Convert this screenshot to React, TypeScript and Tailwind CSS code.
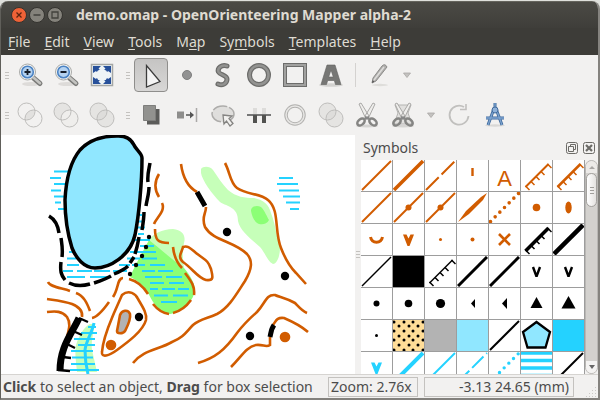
import type { ReactNode } from "react";

const ORANGE = "#d15c00";
const CYAN = "#24d2ff";

function Handle() {
  return (
    <span className="flex w-[11px] shrink-0 flex-col items-center gap-[2px]">
      <i className="h-px w-1 bg-[#c4c2bf]" />
      <i className="h-px w-1 bg-[#c4c2bf]" />
      <i className="h-px w-1 bg-[#c4c2bf]" />
    </span>
  );
}

function Tool({ label, active, children }: { label: string; active?: boolean; children: ReactNode }) {
  return (
    <button type="button" aria-label={label} aria-pressed={active} className="flex h-9 w-9 shrink-0 items-center justify-center">
      <span
        className={
          active
            ? "flex size-[34px] items-center justify-center rounded border border-[#8f8e8c] bg-linear-to-b from-[#c5c4c3] to-[#d8d7d6]"
            : "flex size-[34px] items-center justify-center"
        }
      >
        <svg className="size-7 shrink-0" viewBox="-14 -14 28 28" fill="none">
          {children}
        </svg>
      </span>
    </button>
  );
}

function DropArrow({ label }: { label: string }) {
  return (
    <button type="button" aria-label={label} className="flex h-9 w-5 shrink-0 items-center justify-center">
      <svg className="h-2 w-3" viewBox="0 0 12 8">
        <path d="M2.500 2h7L6 6.500z" fill="#c4c2c0" stroke="#a9a7a5" strokeWidth="0.800" />
      </svg>
    </button>
  );
}

function Magnifier({ plus }: { plus?: boolean }) {
  return (
    <>
      <ellipse cx="1" cy="9" rx="9" ry="2" fill="#dddbd9" />
      <path d="M3.500 3 10 8.500" stroke="#7b7b79" strokeWidth="5" strokeLinecap="round" />
      <path d="M4 3 10 8.200" stroke="#c4c4c1" strokeWidth="2.600" strokeLinecap="round" />
      <circle cx="-2.500" cy="-3" r="8" fill="#f4f4f2" stroke="#a9aaa8" />
      <circle cx="-2.500" cy="-3" r="5.800" fill="#b4d2f1" stroke="#4b83c4" strokeWidth="1.600" />
      <path d={plus ? "M-5.500-3h6M-2.500-6v6" : "M-5.500-3h6"} stroke="#151d2a" strokeWidth="1.800" />
    </>
  );
}

function Circles({ mode }: { mode: "and" | "left" | "minus" | "both" }) {
  return (
    <>
      <circle cx="-3.500" cy="-3.500" r="8.500" fill={mode === "and" ? "none" : "#e5e4e2"} />
      <circle cx="3.500" cy="3.500" r="8.500" fill={mode === "left" ? "#efeeec" : mode === "and" ? "none" : "#e5e4e2"} />
      {mode !== "left" && (
        <path d="M-4.700 4.700A8.500 8.500 0 0 1 4.700-4.700 8.500 8.500 0 0 1-4.700 4.700Z" fill={mode === "and" ? "#e2e1df" : "#dedddb"} />
      )}
      <circle cx="-3.500" cy="-3.500" r="8.500" stroke="#bebdbb" />
      <circle cx="3.500" cy="3.500" r="8.500" stroke="#bebdbb" />
    </>
  );
}

function Scissors() {
  return (
    <>
      <ellipse cx="0" cy="11" rx="11" ry="1.500" fill="#d5d4d2" />
      <path d="M-8-11-6-12 2 1-1 4ZM8-11 6-12-2 1 1 4Z" fill="#efeeec" stroke="#aaa9a7" />
      <path d="M-2 2 2 4M2 2-2 4" stroke="#888" strokeWidth="2.500" />
      <ellipse cx="-6" cy="7" rx="4.200" ry="2.800" transform="rotate(-40 -6 7)" stroke="#858583" strokeWidth="2.500" />
      <ellipse cx="6" cy="7" rx="4.200" ry="2.800" transform="rotate(40 6 7)" stroke="#858583" strokeWidth="2.500" />
    </>
  );
}

function Toolbars() {
  return (
    <div className="shrink-0">
      <div className="flex h-10 items-center gap-[2px]">
        <div className="flex items-center">
          <Handle />
          <Tool label="Zoom in"><Magnifier plus /></Tool>
          <Tool label="Zoom out"><Magnifier /></Tool>
          <Tool label="Show whole map">
            <rect x="-10.500" y="-10.500" width="21" height="21" fill="#eef4f6" stroke="#a5a7a5" strokeWidth="1.500" />
            <path
              d="M-9-9h8l-2.500 2.500 2.500 2-3 3-2-2.500L-9-2ZM9-9H1l2.500 2.500-2.500 2 3 3 2-2.500L9-2ZM-9 9h8L-3.500 6.500-1 4.500l-3-3-2 2.500L-9 2ZM9 9H1l2.500-2.500L1 4.500l3-3 2 2.500L9 2Z"
              fill="#27509a"
            />
            <circle r="6" fill="#eef4f6" />
          </Tool>
        </div>
        <div className="flex items-center">
          <Handle />
          <Tool label="Edit objects" active>
            <path d="M-4.500-9.500V12L9 6.500Z" fill="#f4f4f4" stroke="#3c3c3c" strokeWidth="1.300" />
          </Tool>
          <Tool label="Draw point">
            <circle r="4.500" fill="#929292" stroke="#7e7e7e" />
          </Tool>
          <Tool label="Draw path">
            <path d="M4-9C-1-11-6-7-4.500-3-3 0 4 0 4 4 4 9-1 11-5 9" stroke="#6d6d6b" strokeWidth="5" strokeLinecap="round" />
            <path d="M4-9C-1-11-6-7-4.500-3-3 0 4 0 4 4 4 9-1 11-5 9" stroke="#929290" strokeWidth="2.500" strokeLinecap="round" />
          </Tool>
          <Tool label="Draw circle">
            <circle r="9.500" stroke="#6d6d6b" strokeWidth="5" />
            <circle r="9.500" stroke="#939391" strokeWidth="2.500" />
          </Tool>
          <Tool label="Draw rectangle">
            <rect x="-10" y="-10" width="20" height="20" stroke="#6d6d6b" strokeWidth="4" />
            <rect x="-10" y="-10" width="20" height="20" stroke="#a1a19f" strokeWidth="2" />
          </Tool>
          <Tool label="Write text">
            <ellipse cx="0" cy="10" rx="12" ry="1.800" fill="#d3d2d0" />
            <path fillRule="evenodd" d="M-4-10H4L10 9.500H4.500L3.300 5.500h-6.600L-4.500 9.500H-10ZM0-5-2.300 2h4.600Z" fill="#777775" stroke="#626260" strokeWidth="0.600" />
          </Tool>
          <span className="flex w-3 justify-center">
            <i className="h-6 w-px bg-[#d4d2d0]" />
          </span>
          <Tool label="Paint on template">
            <ellipse cx="1" cy="10" rx="8" ry="1.200" fill="#deddda" />
            <path d="M3-9Q6-12 8-8L-3 6-7 8-6 3Z" fill="#b0afad" stroke="#8c8b89" />
            <path d="M5-8-5 5" stroke="#dedddb" strokeWidth="1.500" />
            <path d="m-7 8 .5-2.500 2 1Z" fill="#555" />
          </Tool>
          <DropArrow label="Template options" />
        </div>
      </div>
      <div className="flex h-10 items-center gap-[2px]">
        <div className="flex items-center">
          <Handle />
          <Tool label="Switch symbol"><Circles mode="and" /></Tool>
          <Tool label="Fill or create border"><Circles mode="left" /></Tool>
          <Tool label="Switch dashes"><Circles mode="minus" /></Tool>
        </div>
        <div className="flex items-center">
          <Handle />
          <Tool label="Duplicate">
            <path d="M-4-6H8.500V9.500H-4Z" fill="#5c5c5a" />
            <path d="M-7.500-9.500H4.500V5.500h-12Z" fill="#92928f" stroke="#7e7e7c" />
          </Tool>
          <Tool label="Move parallel">
            <path d="M-10-3.500h7v7h-7Z" fill="#8e8e8c" />
            <path d="M-1 0h6" stroke="#555" strokeWidth="1.500" />
            <path d="M3-3.500 7 0 3 3.500Z" fill="#555" />
            <path d="M9.500-7V7" stroke="#aaa9a7" strokeWidth="1.500" />
          </Tool>
          <Tool label="Rotate object">
            <ellipse cy="-1" rx="11" ry="8" fill="#dfdedc" stroke="#adacaa" strokeWidth="1.500" strokeDasharray="15 2" />
            <path d="m0 0 9 1-3 2.500 4 5-3 2.500-3.500-5L1 9Z" fill="#f1f0ee" stroke="#858482" strokeWidth="1.300" />
          </Tool>
          <Tool label="Cut hole">
            <path d="M-6-7h4v6h-4ZM3-7h4v6H3Z" fill="#dddcda" />
            <path d="M-12 0h24" stroke="#777" strokeWidth="2" />
            <path d="M-6 0h4v8h-4ZM3 0h4v8H3Z" fill="#525250" />
          </Tool>
          <Tool label="Unite areas">
            <circle r="9" stroke="#b2b1af" strokeWidth="3.500" />
            <circle r="9" stroke="#e6e5e3" strokeWidth="1.500" />
          </Tool>
          <Tool label="Intersect areas"><Circles mode="both" /></Tool>
          <Tool label="Cut object"><Scissors /></Tool>
          <Tool label="Cut away area">
            <path d="M-8-10H8L5-2 9 9H-9l4-11Z" fill="#e1e0de" stroke="#b5b4b2" />
            <Scissors />
          </Tool>
          <DropArrow label="Cut options" />
          <Tool label="Rotate map">
            <path d="M5-8A9.500 9.500 0 1 0 9.500 1" stroke="#c1c0be" strokeWidth="1.800" />
            <path d="M7-11v5.500H1" stroke="#c1c0be" strokeWidth="1.600" />
          </Tool>
          <Tool label="Measure">
            <ellipse cx="0" cy="10.500" rx="10" ry="1.200" fill="#d9d8d6" />
            <path d="M0-12v7M-1.500-5-7 10M1.500-5 7 10M-9 3H9" stroke="#416b9d" strokeWidth="3" />
            <path d="M0-12v7M-1.500-5-7 10M1.500-5 7 10M-9 3H9" stroke="#7ca3cf" strokeWidth="1.300" />
            <circle cy="-5" r="3" fill="#8fb1d8" stroke="#416b9d" />
          </Tool>
        </div>
      </div>
    </div>
  );
}

function MapDrawing() {
  return (
    <svg className="block size-full" viewBox="1 135 354 239" preserveAspectRatio="xMinYMin slice" fill="none" role="img" aria-label="Orienteering map">
      <path d="M149 240C153 234 162 229 173 229 183 230 186 236 184 243 182 253 183 259 184 268L165 262Z" fill="#c6ffb9" />
      <path d="M149 240C158 247 170 258 184 268 191 276 195 284 195 291 192 304 180 314 168 314 156 310 152 300 148 293 143 285 137 280 130 277L135 266Z" fill="#8cff76" />
      <path d="M201 169C203 166 210 166 213 170 218 177 222 184 228 190 236 197 245 198 254 198 264 200 269 205 271 213 276 226 277 239 280 248 280 256 277 264 273 264 267 261 266 254 260 247 252 240 240 231 238 221 238 207 228 207 220 202 212 194 202 180 201 173Z" fill="#c6ffb9" />
      <path d="M251 211C251 206 257 205 261 207 265 211 267 217 269 220 267 224 263 225 259 224 254 222 252 216 251 211Z" fill="#8cff76" />
      <path d="M90 324H95C93 334 91 343 92 350L97 372H77C76 360 74 350 77 342 80 334 84 327 90 324Z" fill="#c6ffb9" />

      <path
        d="M54 171.500H70M50 178H61M54 184H67M51 190.500H61M54 196.500H66M55 202.500H61M58 209H66M138 215H142M138 221.500H142M138 227.500H145M138 234H144M135 240H150M140 246H154M69 252H76M130 252H156M67 258.500H76M127 258.500H140M142 258.500H157M67 265H79M119 265H130M132 265H145M150 265H165M63 271H73M77 271H92M94 271H110M113 271H127M142 271H155M158 271H173M67 277H85M90 277H108M145 277H162M166 277H182M150 283H164M169 283H184M150 289H158M162 289H175M178 289H189M154 295.500H168M173 295.500H188M161 302H177M279 178H293M277 184H298M279 190.500H299M283 196.500H300M286 202.500H300M290 209H299M88 327H96M81 333H97M74 339H95M78 345H95M71 351H93M72 357.500H93M71 364H95M70 370H99"
        stroke={CYAN}
        strokeWidth="2"
      />
      <path d="M94 323C92 333 86 341 85 350 85 359 86 366 88 374" stroke={CYAN} strokeWidth="3" />

      <g stroke={ORANGE} strokeWidth="2.600">
        <path d="M159 174C154 182 154 189 159 197M162 203C166 211 156 218 154 224M155 229C155 240 158 243 169 243M173 247C174 256 176 262 182 268M185 273C192 282 195 287 194 295M191 300C186 307 181 311 173 313M169 314C161 313 157 309 153 304M148 294C143 286 137 281 129 279M123 278C117 278 119 288 113 297M109 302C104 309 98 317 92 318M90 311C87 303 84 296 76 293M70 291C62 288 50 287 48 282" />
        <path d="M47 299C61 301 84 303 82 317M47 312C56 311 62 311 67 317 71 323 69 329 67 337" />
        <path d="M122 295C129 289 136 294 138 299 144 309 147 314 146 320 143 331 128 342 117 350 109 356 101 358 102 352 103 338 109 325 114 313Z" />
        <path d="M181 164C183 179 188 187 197 192M206 207C206 214 201 217 205 227 213 241 234 241 247 254 253 261 252 269 245 281 237 293 229 308 217 314 206 319 200 319 193 325 186 332 184 337 172 342 158 350 143 350 133 363" />
        <path d="M225 163C230 172 230 183 237 188 247 195 260 193 268 200 280 210 274 231 281 248 286 261 290 267 296 273L306 284" />
        <path d="M183 247C188 245 191 249 196 253 205 260 208 260 211 269 213 277 214 281 206 280 198 278 193 269 183 262 177 257 182 252 183 247Z" />
        <path d="M307 313C302 311 298 306 295 303 286 298 279 297 275 295 266 294 265 304 257 312 249 319 243 325 237 333 225 350 215 358 198 363" />
        <path d="M308 332C300 325 291 321 284 318 277 317 276 321 273 325M270 337V345C266 348 263 344 256 345 246 347 242 356 231 367" />
      </g>

      <path
        d="M117 136C126 135.500 131 139 134 145 136 150 142 153 142 158 142 182 139 215 135 235 130 256 110 268 95 268 84 268 76 258 72 248 67 232 65 215 65 200 66 180 70 162 80 150 90 139 104 136 117 136Z"
        fill="#90e7ff"
        stroke="#000"
        strokeWidth="3.500"
      />
      <path
        d="M49 216C56 220 58 226 59 233M61 238C62 245 63 249 62 257M61 262C60 271 61 275 65 280M69 283C75 286 83 286 90 284M94 283C100 281 106 279 111 276M114 274C119 272 124 270 128 266M130 263 134 257M135 254C137 248 138 243 139 237M142 230C143 224 144 218 144 212M146 206C147 199 149 194 149 187M148 182C147 175 149 169 150 163"
        stroke="#000"
        strokeWidth="3.500"
      />
      <g fill="#000">
        <circle cx="149" cy="237" r="2.200" /><circle cx="146" cy="247" r="2.200" /><circle cx="142" cy="256" r="2.200" />
        <circle cx="136" cy="265" r="2.200" /><circle cx="130" cy="274" r="2.200" />
        <circle cx="139" cy="317" r="4.200" /><circle cx="227" cy="232" r="4.200" />
        <circle cx="285" cy="276" r="4.200" /><circle cx="250" cy="336" r="4.200" />
      </g>
      <circle cx="111" cy="345" r="5.300" fill={ORANGE} />
      <circle cx="285" cy="337" r="5.300" fill={ORANGE} />
      <path d="M120 315C122 310 128 309 130 314 131 320 127 327 125 331 123 334 117 334 117 331Z" fill="#b3b3b3" stroke={ORANGE} strokeWidth="2.600" />
      <path d="M197 192 205 206M274 325C271 329 271 333 270 337" stroke="#000" strokeWidth="5" />
      <path d="M79 318C71 335 60 347 60 371" stroke="#000" strokeWidth="7" />
      <path d="M79 318 88 322M73 331 82 335M67 344 75 348M63 357 71 358M58 370 70 371" stroke="#000" strokeWidth="2.300" />
    </svg>
  );
}

const diag = (color: string, width: number, dash?: string) => (
  <path d="M1 30 30 1" stroke={color} strokeWidth={width} strokeDasharray={dash} />
);
const dot = (color: string, r: number) => <circle cx="15.500" cy="15.500" r={r} fill={color} />;
const comb = (color: string, width: number) => (
  <>
    <path d="M4.500 27 27.500 4" stroke={color} strokeWidth={width} />
    <path d="m4.500 26 4 4M10 21.500l3.500 3.500M15 16.500l3.500 3.500M20 11.500l3.500 3.500M26.500 4l4 4" stroke={color} strokeWidth="1.500" />
  </>
);
const vee = (color: string) => <path d="M10 10.500h3.500l2 4 2-4H21l-4.500 11.500h-2Z" fill={color} />;
const openVee = (color: string) => <path d="m12 11 3.500 9.500L19 11" stroke={color} strokeWidth="2.400" strokeLinejoin="bevel" />;
const fill = (color: string) => <rect width="31" height="31" fill={color} />;
const sandDots = [
  [1, 2], [11, 2], [20, 2], [30, 2], [6, 6], [16, 6], [25, 6], [1, 11], [11, 11], [20, 11], [30, 11],
  [6, 16], [16, 16], [25, 16], [1, 20], [11, 20], [20, 20], [30, 20], [6, 25], [16, 25], [25, 25],
  [1, 30], [11, 30], [20, 30], [30, 30],
];

const symbols: { name: string; art: ReactNode }[] = [
  { name: "Contour", art: diag(ORANGE, 2) },
  { name: "Index contour", art: diag(ORANGE, 3.5) },
  { name: "Form line", art: diag(ORANGE, 2, "18 4") },
  { name: "Slope line", art: <path d="M15.500 8v8" stroke={ORANGE} strokeWidth="2.400" /> },
  {
    name: "Contour value",
    art: <text x="15.500" y="26" textAnchor="middle" fontSize="22" fontFamily="Liberation Sans, sans-serif" fill={ORANGE}>A</text>,
  },
  { name: "Earth bank", art: comb(ORANGE, 2) },
  { name: "Earth bank, large", art: comb(ORANGE, 2.5) },
  { name: "Earth wall", art: diag(ORANGE, 2) },
  { name: "Earth wall, dotted", art: <>{diag(ORANGE, 2)}{dot(ORANGE, 3)}</> },
  { name: "Small earth wall", art: <>{diag(ORANGE, 2)}{dot(ORANGE, 3)}</> },
  { name: "Erosion gully", art: <path d="M1 30 9 19 24 5 30 1 26 8 12 22Z" fill={ORANGE} /> },
  {
    name: "Small gully",
    art: <path d="M1.500 29.500 30 1" stroke={ORANGE} strokeWidth="3.600" strokeLinecap="round" strokeDasharray="0 6.600" />,
  },
  { name: "Knoll", art: dot(ORANGE, 3.8) },
  { name: "Elongated knoll", art: <ellipse cx="15.500" cy="15.500" rx="3.200" ry="6" fill={ORANGE} /> },
  { name: "Small depression", art: <path d="M9.500 13C11 20 20 20 21.500 13" stroke={ORANGE} strokeWidth="3" /> },
  { name: "Pit", art: vee(ORANGE) },
  { name: "Broken ground", art: dot(ORANGE, 1.5) },
  { name: "Broken ground, large", art: dot(ORANGE, 2) },
  { name: "Special feature", art: <path d="m10 10 11 11M21 10 10 21" stroke={ORANGE} strokeWidth="2.600" /> },
  { name: "Cliff", art: comb("#000", 3.5) },
  { name: "Cliff, thick", art: diag("#000", 4.5) },
  { name: "Rock line", art: diag("#000", 1.5) },
  { name: "Giant boulder", art: fill("#000") },
  { name: "Passable cliff", art: comb("#000", 1.5) },
  { name: "Crag", art: diag("#000", 3) },
  { name: "Crag, thin", art: diag("#000", 3) },
  { name: "Rocky pit", art: openVee("#000") },
  { name: "Cave", art: openVee("#000") },
  { name: "Boulder", art: dot("#000", 3) },
  { name: "Large boulder", art: dot("#000", 3.8) },
  { name: "Huge boulder", art: dot("#000", 4.6) },
  { name: "Boulder field", art: <path d="M18 11v9l-4-4.500Z" fill="#000" /> },
  { name: "Boulder field, large", art: <path d="M18 10v11l-5-5.500Z" fill="#000" /> },
  { name: "Boulder cluster", art: <path d="M15.500 9 21.500 20h-12Z" fill="#000" /> },
  { name: "Boulder cluster, large", art: <path d="M15.500 8 22.500 20.500h-14Z" fill="#000" /> },
  { name: "Stony ground", art: dot("#000", 1.5) },
  {
    name: "Open sandy ground",
    art: (
      <>
        {fill("#ffdd98")}
        {sandDots.map(([x, y]) => <circle key={`${x}-${y}`} cx={x} cy={y} r="1.500" fill="#000" />)}
      </>
    ),
  },
  { name: "Bare rock", art: fill("#b3b3b3") },
  { name: "Lake", art: fill("#90e7ff") },
  { name: "Bank line", art: diag("#000", 2) },
  { name: "Lake with bank", art: <path d="M15.500 2 29 12 24.500 27.500h-18L2 12Z" fill="#90e7ff" stroke="#000" strokeWidth="2.300" /> },
  { name: "Pond", art: fill(CYAN) },
  { name: "Waterhole", art: vee(CYAN) },
  { name: "Uncrossable river", art: diag(CYAN, 4) },
  { name: "Crossable watercourse", art: diag(CYAN, 2) },
  { name: "Minor watercourse", art: diag(CYAN, 2, "16 4") },
  {
    name: "Water channel",
    art: <path d="M10.500 20.500 30 1" stroke={CYAN} strokeWidth="3.400" strokeLinecap="round" strokeDasharray="0 6.600" />,
  },
  { name: "Uncrossable marsh", art: <path d="M0 1h31M0 8.500h31M0 16h31M0 23.500h31" stroke={CYAN} strokeWidth="3.500" /> },
  { name: "Marsh edge", art: diag("#000", 2) },
];

function SymbolDock() {
  return (
    <aside className="flex w-[237px] shrink-0 flex-col">
      <header className="flex h-[25px] shrink-0 items-center gap-[5px] pr-[3px] pl-[2px]">
        <h2 className="flex-1 text-[14px] leading-5 text-[#4c4c4c]">Symbols</h2>
        <button type="button" aria-label="Float panel">
          <svg className="size-3" viewBox="0 0 12 12" fill="none" stroke="#6c6b67">
            <rect x="0.500" y="0.500" width="11" height="11" rx="2" />
            <path d="M4.500 4.500v-2h5v5h-2M2.500 4.500h5v5h-5z" />
          </svg>
        </button>
        <button type="button" aria-label="Close panel">
          <svg className="size-3" viewBox="0 0 12 12" fill="none" stroke="#6c6b67">
            <rect x="0.500" y="0.500" width="11" height="11" rx="2" />
            <path d="m3 3 6 6M9 3 3 9" strokeWidth="2.200" />
          </svg>
        </button>
      </header>
      <div className="flex min-h-0 flex-1">
        <div className="grid flex-1 auto-rows-[32px] grid-cols-[repeat(7,32px)] overflow-hidden bg-white">
          {symbols.map((s) => (
            <button key={s.name} type="button" aria-label={s.name} className="size-8 border-r border-b border-[#9d9d9d]">
              <svg className="block size-[31px]" viewBox="0 0 31 31" fill="none">{s.art}</svg>
            </button>
          ))}
        </div>
        <div className="flex w-[13px] shrink-0 flex-col rounded-full border border-[#b9b7b4] bg-[#d3d1ce]">
          <button type="button" aria-label="Scroll up" className="flex h-3 items-center justify-center rounded-t-full bg-[#eceae8]">
            <svg className="h-1 w-2" viewBox="0 0 8 4"><path d="M1 4 4 1l3 3Z" fill="#a9a7a5" /></svg>
          </button>
          <div className="flex h-[34px] flex-col items-center justify-center gap-[2px] rounded-full border border-[#a3a19e] bg-linear-to-r from-white to-[#e4e2e0]">
            <i className="h-px w-1 bg-[#a09e9b]" />
            <i className="h-px w-1 bg-[#a09e9b]" />
            <i className="h-px w-1 bg-[#a09e9b]" />
          </div>
          <div className="flex-1" />
          <button type="button" aria-label="Scroll down" className="flex h-3 items-center justify-center rounded-b-full bg-[#f4f3f2]">
            <svg className="h-1 w-2" viewBox="0 0 8 4"><path d="M1 0h6L4 4Z" fill="#666" /></svg>
          </button>
        </div>
      </div>
    </aside>
  );
}

const menus = [
  ["", "F", "ile"],
  ["", "E", "dit"],
  ["", "V", "iew"],
  ["", "T", "ools"],
  ["M", "a", "p"],
  ["Sy", "m", "bols"],
  ["", "T", "emplates"],
  ["", "H", "elp"],
];

function WindowButton({ label, close, d }: { label: string; close?: boolean; d: string }) {
  return (
    <button type="button" aria-label={label}>
      <svg className="size-4" viewBox="0 0 16 16" fill="none">
        <circle cx="8" cy="8" r="7.500" fill={close ? "#ee6237" : "#84827b"} stroke="#34332f" />
        <path d={d} stroke={close ? "#5b2410" : "#42413c"} strokeWidth="1.300" />
      </svg>
    </button>
  );
}

export default function App() {
  return (
    <div className="h-screen min-h-[300px] bg-[#dfe0dc] pt-px font-['Noto_Sans','Open_Sans',sans-serif] text-[14px] text-[#4c4c4c]">
      <div className="flex h-full flex-col overflow-hidden rounded-t-lg border-r-2 border-b-2 border-l border-r-[#85837f] border-b-[#83817d] border-l-[#605f5a] bg-[#f2f1f0]">
        <header className="flex h-[27px] shrink-0 items-center border-t border-[#65645d] bg-linear-to-b from-[#4b4a45] to-[#3f3e3a] pl-[10px] text-[#dfdbd2]">
          <div className="flex gap-[2px]">
            <WindowButton label="Close" close d="m5.500 5.500 5 5m0-5-5 5" />
            <WindowButton label="Minimize" d="M4.500 8h7" />
            <WindowButton label="Maximize" d="M5 5h6v6H5Z" />
          </div>
          <h1 className="ml-[13px] text-[14px] leading-5 font-bold whitespace-nowrap">demo.omap - OpenOrienteering Mapper alpha-2</h1>
        </header>
        <nav className="flex h-[27px] shrink-0 items-center gap-[14px] bg-[#3d3c38] pl-[7px] leading-5 text-[#dfdbd2]">
          {menus.map(([before, key, after]) => (
            <button key={before + key + after} type="button">
              {before}
              <span className="underline decoration-1 underline-offset-2">{key}</span>
              {after}
            </button>
          ))}
        </nav>
        <Toolbars />
        <main className="flex min-h-0 flex-1">
          <div className="min-w-0 flex-1 overflow-hidden bg-white">
            <MapDrawing />
          </div>
          <div className="flex w-[6px] shrink-0 flex-col items-center justify-center gap-[2px]">
            <i className="h-px w-1 bg-[#c4c2bf]" />
            <i className="h-px w-1 bg-[#c4c2bf]" />
            <i className="h-px w-1 bg-[#c4c2bf]" />
          </div>
          <SymbolDock />
        </main>
        <footer className="flex h-6 shrink-0 items-center border-t border-[#d6d4d1] pl-[2px] text-[14px] leading-[18px] whitespace-nowrap">
          <p className="min-w-0 flex-1">
            <b>Click</b> to select an object, <b>Drag</b> for box selection
          </p>
          <output className="h-5 w-[90px] border border-[#c4c2bf] px-[2px]">Zoom: 2.76x</output>
          <output className="ml-[6px] h-5 w-[150px] border border-[#c4c2bf] px-1 text-right">-3.13 24.65 (mm)</output>
          <svg className="ml-3 size-3 self-end" viewBox="0 0 12 12" fill="#cbc9c6">
            <path d="M9 1h1v1H9ZM6 4h1v1H6ZM9 4h1v1H9ZM3 7h1v1H3ZM6 7h1v1H6ZM9 7h1v1H9ZM0 10h1v1H0ZM3 10h1v1H3ZM6 10h1v1H6ZM9 10h1v1H9Z" />
          </svg>
        </footer>
      </div>
    </div>
  );
}
